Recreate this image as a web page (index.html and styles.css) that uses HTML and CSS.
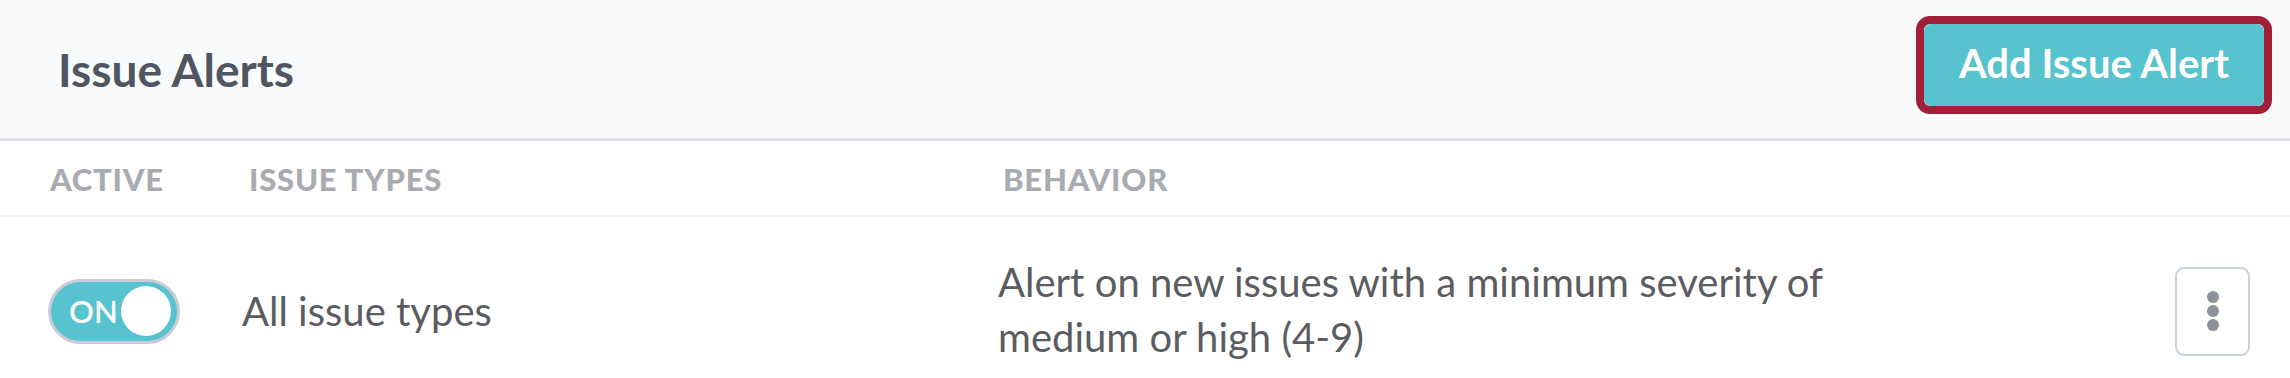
FILE: index.html
```html
<!DOCTYPE html>
<html lang="en">
<head>
<meta charset="utf-8">
<title>Issue Alerts</title>
<link rel="stylesheet" href="styles.css">
</head>
<body>
<div class="panel">
  <header class="panel-header">
    <h2 class="panel-title">Issue Alerts</h2>
    <div class="focus-ring"><button class="btn-primary">Add Issue Alert</button></div>
  </header>
  <div class="table">
    <div class="row head">
      <div class="cell c-active">Active</div>
      <div class="cell c-types">Issue Types</div>
      <div class="cell c-behavior">Behavior</div>
      <div class="cell c-actions"></div>
    </div>
    <div class="row body">
      <div class="cell c-active">
        <div class="toggle"><span class="toggle-label">ON</span><span class="knob"></span></div>
      </div>
      <div class="cell c-types">All issue types</div>
      <div class="cell c-behavior"><p class="behavior-text">Alert on new issues with a minimum severity of medium or high (4-9)</p></div>
      <div class="cell c-actions">
        <button class="kebab"><span class="dot"></span><span class="dot"></span><span class="dot"></span></button>
      </div>
    </div>
  </div>
</div>
</body>
</html>
```
FILE: styles.css
```css
* { box-sizing: border-box; }
html, body { margin: 0; padding: 0; background: #ffffff; }
body { font-family: Lato, "Noto Sans", sans-serif; }

.panel-header {
  height: 141px;
  background: #f9fafc;
  border-bottom: 3px solid #dde0e6;
  display: flex;
  align-items: center;
  justify-content: space-between;
  padding: 0 18px 0 58px;
}
.panel-title {
  margin: 0;
  font-size: 46px;
  font-weight: 700;
  color: #4f5662;
}
.focus-ring {
  border: 8px solid #a11f37;
  border-radius: 14px;
  margin-top: -8px;
}
.btn-primary {
  display: block;
  width: 340px;
  height: 82px;
  border: none;
  border-radius: 7px;
  background: #56c3ce;
  color: #ffffff;
  font-family: Lato, "Noto Sans", sans-serif;
  font-size: 40px;
  font-weight: 700;
  padding: 0 0 4px;
}

.row {
  display: grid;
  grid-template-columns: 194px 756px 1fr 115px;
  padding-left: 48px;
  align-items: center;
}
.row.head {
  height: 76px;
  border-bottom: 2px solid #f2f3f5;
}
.row.head .cell {
  font-size: 31px;
  font-weight: 900;
  letter-spacing: 0.8px;
  text-transform: uppercase;
  color: #a9abb1;
  padding-top: 2px;
}
.row.head .c-active { padding-left: 2px; }
.row.head .c-types { padding-left: 7px; }
.row.head .c-behavior { padding-left: 5px; }

.row.body {
  height: 161px;
  padding-top: 27px;
  color: #5a5c61;
  font-size: 40px;
}
.behavior-text {
  margin: 0;
  width: 880px;
  line-height: 55px;
  padding-bottom: 2px;
}

.toggle {
  width: 132px;
  height: 65px;
  border-radius: 33px;
  background: #56c3ce;
  border: 3px solid #c9ccd6;
  display: flex;
  align-items: center;
  justify-content: space-between;
  padding: 0 6px 0 18px;
}
.toggle-label {
  color: #ffffff;
  font-size: 31px;
  font-weight: 600;
}
.knob {
  width: 50px;
  height: 50px;
  border-radius: 50%;
  background: #ffffff;
}

.c-actions { display: flex; justify-content: flex-start; }
.kebab {
  width: 75px;
  height: 89px;
  border: 2px solid #c8d2db;
  border-radius: 9px;
  background: #ffffff;
  display: flex;
  flex-direction: column;
  align-items: center;
  justify-content: center;
  gap: 2px;
  padding: 0;
}
.dot {
  width: 12px;
  height: 12px;
  border-radius: 50%;
  background: #8a919b;
}
```
